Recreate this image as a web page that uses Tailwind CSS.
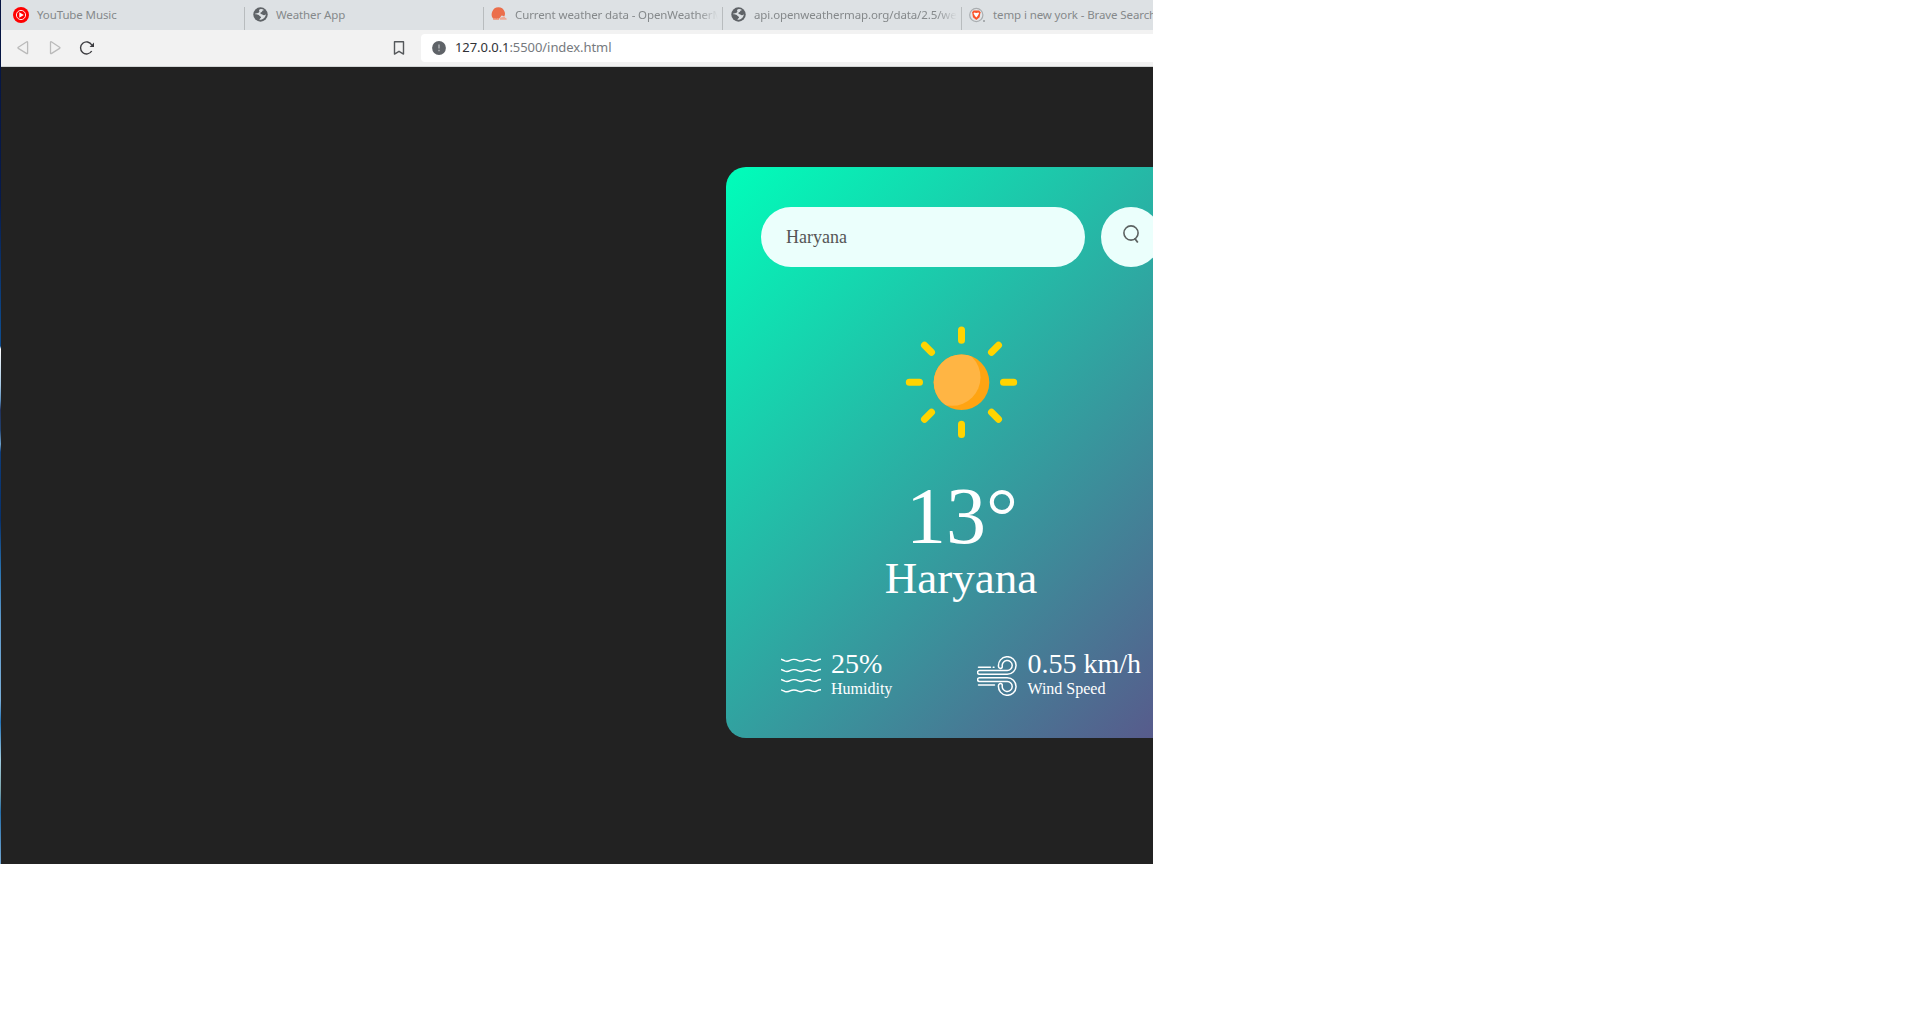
<!DOCTYPE html>
<html lang="en">
<head>
<meta charset="utf-8">
<title>Weather App</title>
<script src="https://cdn.jsdelivr.net/npm/@tailwindcss/browser@4"></script>
</head>
<body class="bg-white overflow-hidden">
<div class="flex w-[1153px] h-[864px] overflow-hidden bg-[#222]">
  <div class="w-px shrink-0 bg-[linear-gradient(to_bottom,#061440_0px,#061a4c_200px,#0d4a8c_330px,#0d4a8c_346px,#fff_349px,#a5c8e5_385px,#5f90bd_400px,#20305a_410px,#20406e_430px,#6c9fc9_444px,#0d3c7a_452px,#06306c_520px,#2872b0_570px,#5f9acb_620px,#79aed8_700px,#2474b8_722px,#a0cce0_760px,#7ba5ac_790px,#2670ac_812px,#75a8d2_864px)]"></div>
  <div class="w-[1400px] shrink-0">
    <!-- tab strip -->
    <div class="flex h-[30px] bg-[#dde1e4] pt-[7px] font-['Noto_Sans','Open_Sans',sans-serif] text-[11.5px] text-[#85898b] leading-[16px] tracking-[-0.11px] whitespace-nowrap">
      <div class="flex w-[244px] shrink-0 border-r border-[#b8bcbe] pl-3">
        <svg class="size-4 shrink-0" viewBox="0 0 16 16"><circle cx="8" cy="8" r="8" fill="#f00"/><circle cx="8" cy="8" r="4.6" fill="none" stroke="#fff" stroke-width=".9"/><path d="M6.3 5.3 10.8 8 6.3 10.7z" fill="#fff"/></svg>
        <span class="ml-2">YouTube Music</span>
      </div>
      <div class="flex w-[239px] shrink-0 border-r border-[#b8bcbe] pl-[8px]">
        <svg class="size-[15px] shrink-0" viewBox="0 0 16 16"><circle cx="8" cy="8" r="7.7" fill="#5f6367"/><path d="M8.6 2.2C6.8 2.4 6 3.6 6.7 4.6 7.4 5.4 6 6.1 5.2 6.5L2 7.2c.8.9 2.2.8 3.4 1 1.3.2 1.2 1.4 2.5 1.8 1.2.4.7 1.6-.1 2.1l-1.1 1.6c3.9 0 6.7-2.6 7-6-1.2 1.7-2.8 1.4-3.7.4-.8-.9-2.3-.8-2.2-1.8.1-1 2-.7 2-1.9 0-1 1.5-.9 1.9-1.3A6 6 0 0 0 8.6 2.2z" fill="#dde1e4"/></svg>
        <span class="ml-[8px]">Weather App</span>
      </div>
      <div class="flex w-[239px] shrink-0 border-r border-[#b8bcbe] pl-[7px]">
        <svg class="size-4 shrink-0" viewBox="0 0 16 16"><path d="M1.5 10.800C.3 9 .4 6.500 1.300 4.500A6.500 6.500 0 0 1 13.500 4.500c.7 1.700.7 3.300-.1 4.700l-2.700-.7-2.700 3.200-4.500 1z" fill="#eb6e4b"/><path d="M2 12.600c1-2 3-1.600 3.500-.8 1-1 2.800-.3 2.500 1.200H2z" fill="#eba38c"/><path d="M9 12.800c-1-2 1-3.200 2-2.200 1-2 3.600-1 3.200.5 1.600-.1 1.900 1.700.8 1.700z" fill="#eda996"/></svg>
        <span class="ml-[8px] w-[203px] overflow-hidden [mask-image:linear-gradient(to_right,#000_90%,transparent_100%)]">Current weather data - OpenWeatherMap</span>
      </div>
      <div class="flex w-[239px] shrink-0 border-r border-[#b8bcbe] pl-[8px]">
        <svg class="size-[15px] shrink-0" viewBox="0 0 16 16"><circle cx="8" cy="8" r="7.7" fill="#5f6367"/><path d="M8.6 2.2C6.8 2.4 6 3.6 6.7 4.6 7.4 5.4 6 6.1 5.2 6.5L2 7.2c.8.9 2.2.8 3.4 1 1.3.2 1.2 1.4 2.5 1.8 1.2.4.7 1.6-.1 2.1l-1.1 1.6c3.9 0 6.7-2.6 7-6-1.2 1.7-2.8 1.4-3.7.4-.8-.9-2.3-.8-2.2-1.8.1-1 2-.7 2-1.9 0-1 1.5-.9 1.9-1.3A6 6 0 0 0 8.6 2.2z" fill="#dde1e4"/></svg>
        <span class="ml-[8px] w-[203px] overflow-hidden [mask-image:linear-gradient(to_right,#000_90%,transparent_100%)]">api.openweathermap.org/data/2.5/weather?</span>
      </div>
      <div class="flex shrink-0 pl-[7px]">
        <svg class="size-4 shrink-0" viewBox="0 0 16 16"><circle cx="7.3" cy="8" r="6.6" fill="#e4e6e8" stroke="#a9adb0" stroke-width="1.2"/><rect x="14" y="13" width="2" height="2" fill="#a9adb0"/><path d="M4.5 3.500h5.600l1.400 1.700-.9 5-3.300 2.900L4 10.200 3.100 5.200z" fill="#fb542b"/><path d="m5 5.500 2.300.6 2.300-.6.4 1-1.400 2.400-1.300 1.500L6 8.900 4.600 6.500z" fill="#fff"/></svg>
        <span class="ml-[8px]">temp i new york - Brave Search</span>
      </div>
    </div>
    <!-- toolbar -->
    <div class="flex h-[37px] border-b border-[#d2d5d5] bg-[#f2f2f2] pt-[4px]">
      <svg class="mt-[6px] ml-[16px] size-4 shrink-0" viewBox="0 0 16 16" fill="none" stroke="#bbb" stroke-width="1.3" stroke-linejoin="round"><path d="M9.8 1.800 1.300 7.200q-.8.600 0 1.200l8.500 5.200q.8.300.8-.5V2.300q0-.8-.8-.5z"/></svg>
      <svg class="mt-[6px] ml-[16px] size-4 shrink-0" viewBox="0 0 16 16" fill="none" stroke="#bbb" stroke-width="1.3" stroke-linejoin="round"><path d="M2.300 1.800 10.600 7.200q.8.600 0 1.200L2.300 13.600q-.8.300-.8-.5V2.300q0-.8.800-.5z"/></svg>
      <svg class="mt-[6px] ml-[14px] size-4 shrink-0" viewBox="0 0 16 16" fill="none" stroke="#3b3b3f" stroke-width="1.4"><path d="M12.800 5A6 6 0 1 0 12.700 11"/><path d="M15 2.500v4.600h-4.400z" fill="#3b3b3f" stroke="none"/></svg>
      <svg class="mt-[6px] ml-[296px] size-4 shrink-0" viewBox="0 0 16 16" fill="none" stroke="#55585b" stroke-width="1.4" stroke-linejoin="round"><path d="M3.500 1.800h9v12.300L8 11.300l-4.500 2.800z"/></svg>
      <div class="ml-[14px] flex h-7 flex-1 items-center rounded-[4px] bg-white pl-[11px] font-['Noto_Sans','Open_Sans',sans-serif] text-[13px] tracking-[-0.07px]">
        <svg class="size-[14px] shrink-0" viewBox="0 0 14 14"><circle cx="7" cy="7" r="6.9" fill="#5f6368"/><path d="M6.200 3.600h1.600v4H6.200zM6.200 8.700h1.600v1.600H6.200z" fill="#a9acae"/></svg>
        <span class="ml-[9px] whitespace-nowrap text-[#767a7e]"><span class="text-[#303236]">127.0.0.1</span>:5500/index.html</span>
      </div>
    </div>
    <!-- weather card -->
    <div class="mt-[100px] ml-[725px] h-[571px] w-[470px] rounded-[20px] bg-[linear-gradient(135deg,#00feba,#5b548a)] px-[35px] py-10 text-center font-['Liberation_Serif',serif] text-white">
      <div class="flex items-center justify-between">
        <div class="flex h-[60px] w-[324px] items-center rounded-[30px] bg-[#ebfffc] px-[25px] pt-px text-[18px] text-[#555]">Haryana</div>
        <div class="flex size-[60px] items-center justify-center rounded-full bg-[#ebfffc]">
          <svg class="mb-[6px] size-[18px]" viewBox="0 0 18 18" fill="none" stroke="#5c6261" stroke-width="1.6"><circle cx="9" cy="8" r="7.1"/><path d="m12.600 13.200 3.200 4.300" stroke-width="1.8"/></svg>
        </div>
      </div>
      <svg class="mx-auto mt-[30px] size-[170px]" viewBox="-85.5 -85.3 170 170">
        <defs><clipPath id="disc"><circle r="27.8"/></clipPath></defs>
        <g stroke="#ffd400" stroke-width="7" stroke-linecap="round"><path d="M0-52.200v10.200M0 52.200V42M-52.200 0H-42M52.200 0H42M-37-37l7 7M37-37l-7 7M-37 37l7-7M37 37l-7-7"/></g>
        <circle r="27.8" fill="#ffa412"/>
        <circle cx="-9.500" cy="-5" r="28.5" fill="#ffb544" clip-path="url(#disc)"/>
      </svg>
      <div class="mt-[13px] mb-px h-[72px] pl-[2px] text-[80px] leading-[72px]">13°</div>
      <div class="h-[51px] text-[45px] leading-[51px]">Haryana</div>
      <div class="mt-[50px] flex h-[44px] items-center justify-between px-5 text-left">
        <div class="flex items-center">
          <svg class="mr-[10px] size-10" viewBox="0 0 40 40" fill="none" stroke="#fff" stroke-width="1.4"><path d="M0 3.200q3 1.300 4 1.700 2.600.8 5-.6 4-2 8.500.3 3 1.200 5.500-.3 4-1.900 8 .3 3 1 5-.3 2-1.100 4-1.100M0 13.500q3 1.300 4 1.700 2.600.8 5-.6 4-2 8.500.3 3 1.200 5.500-.3 4-1.900 8 .3 3 1 5-.3 2-1.100 4-1.100M0 23.500q3 1.300 4 1.700 2.600.8 5-.6 4-2 8.500.3 3 1.200 5.500-.3 4-1.900 8 .3 3 1 5-.3 2-1.100 4-1.100M0 33.800q3 1.300 4 1.700 2.600.8 5-.6 4-2 8.500.3 3 1.200 5.500-.3 4-1.900 8 .3 3 1 5-.3 2-1.100 4-1.100"/></svg>
          <div class="h-[44px]">
            <div class="-mt-[6px] h-8 text-[28px] leading-[32px]">25%</div>
            <div class="text-[16px] leading-[18px]">Humidity</div>
          </div>
        </div>
        <div class="flex items-center">
          <svg class="mr-[10px] size-10 shrink-0" viewBox="0 0 40 40" fill="none" stroke="#fff" stroke-width="1.5" stroke-linecap="round" stroke-linejoin="round"><path d="M1.500 11.200H13.500M16.200 11.200h.8M1.500 29H17.500"/><path d="M30 14.500H2.500a1.900 1.900 0 0 0 0 3.800H30A8.800 8.800 0 1 0 21.500 10.500a1.900 1.900 0 0 0 3.800 0A5 5 0 1 1 30 14.500z"/><path d="M30 25.500H2.500a1.900 1.900 0 0 1 0-3.800H30A8.800 8.800 0 1 1 21.500 29.500a1.900 1.900 0 0 1 3.800 0A5 5 0 1 0 30 25.500z"/></svg>
          <div class="h-[44px] whitespace-nowrap">
            <div class="-mt-[6px] h-8 text-[28px] leading-[32px]">0.55 km/h</div>
            <div class="text-[16px] leading-[18px]">Wind Speed</div>
          </div>
        </div>
      </div>
    </div>
  </div>
</div>
</body>
</html>
